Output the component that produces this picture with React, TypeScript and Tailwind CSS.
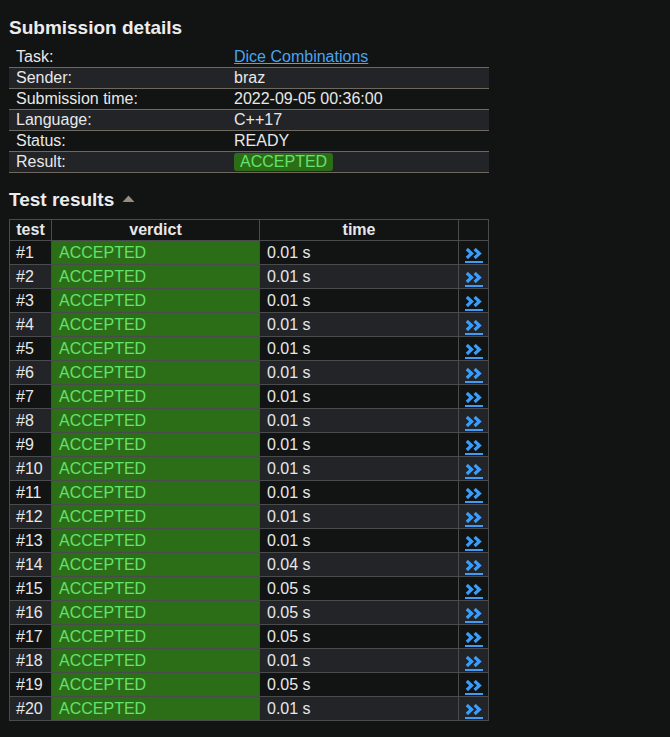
import React from "react";

const details: [string, React.ReactNode][] = [
  ["Task:", <a className="text-[#4aa3f0] underline" href="#">Dice Combinations</a>],
  ["Sender:", "braz"],
  ["Submission time:", "2022-09-05 00:36:00"],
  ["Language:", "C++17"],
  ["Status:", "READY"],
  [
    "Result:",
    <span className="inline-block h-[18px] leading-[18px] px-[6px] rounded-[3px] bg-[#2b6e17] text-[#63e36a]">ACCEPTED</span>,
  ],
];

const times = [
  "0.01", "0.01", "0.01", "0.01", "0.01", "0.01", "0.01", "0.01", "0.01", "0.01",
  "0.01", "0.01", "0.01", "0.04", "0.05", "0.05", "0.05", "0.01", "0.05", "0.01",
];

function Chevrons() {
  return (
    <a href="#" className="flex flex-col items-center">
      <svg width="17" height="11" viewBox="0 0 17 11">
        <polyline points="1.8,1 6.6,5.5 1.8,10" fill="none" stroke="#3d9cf5" strokeWidth="3.2" />
        <polyline points="9.6,1 14.4,5.5 9.6,10" fill="none" stroke="#3d9cf5" strokeWidth="3.2" />
      </svg>
      <div className="w-[18px] h-[2px] bg-[#3d9cf5] mt-[2px]" />
    </a>
  );
}

export default function App() {
  return (
    <div
      className="min-h-[737px] w-full bg-[#121313] text-[#e8e8e8] text-[16px] pt-[16px] px-[9px]"
      style={{ fontFamily: '"Liberation Sans", Arial, sans-serif' }}
    >
      <h2 className="text-[19px] font-bold leading-[24px] text-[#ececec]">Submission details</h2>
      <div className="w-[480px] mt-[7px]">
        {details.map(([k, v], i) => (
          <div
            key={i}
            className={
              "flex items-center leading-[20px] " +
              (i % 2 === 1 ? "bg-[#222428] border-y border-[#6f685f] h-[22px]" : "h-[20px]")
            }
          >
            <div className="w-[225px] pl-[7px]">{k}</div>
            <div>{v}</div>
          </div>
        ))}
      </div>

      <div className="flex items-center mt-[15px] h-[24px]">
        <h2 className="text-[19px] font-bold leading-[24px] text-[#ececec]">Test results</h2>
        <svg width="13" height="8" viewBox="0 0 13 8" className="ml-[8px] mt-[-2px]">
          <polygon points="6.5,0.5 12.5,7 0.5,7" fill="#958d83" />
        </svg>
      </div>

      <div className="mt-[7px] w-[480px] grid grid-cols-[41px_207px_198px_29px] gap-px bg-[#4a4b4c] border border-[#4a4b4c]">
        <div className="bg-[#121313] h-[20px] leading-[20px] font-bold text-center">test</div>
        <div className="bg-[#121313] h-[20px] leading-[20px] font-bold text-center">verdict</div>
        <div className="bg-[#121313] h-[20px] leading-[20px] font-bold text-center">time</div>
        <div className="bg-[#121313] h-[20px]" />
        {times.map((t, i) => {
          const rowBg = i % 2 === 1 ? "bg-[#222428]" : "bg-[#121313]";
          return (
            <React.Fragment key={i}>
              <div className={rowBg + " h-[23px] leading-[23px] pl-[6px]"}>#{i + 1}</div>
              <div className="bg-[#2b6e17] h-[23px] leading-[23px] pl-[7px] text-[#63e36a]">ACCEPTED</div>
              <div className={rowBg + " h-[23px] leading-[23px] pl-[7px]"}>{t} s</div>
              <div className={rowBg + " h-[23px] flex items-start justify-center pt-[7px]"}>
                <Chevrons />
              </div>
            </React.Fragment>
          );
        })}
      </div>
    </div>
  );
}
